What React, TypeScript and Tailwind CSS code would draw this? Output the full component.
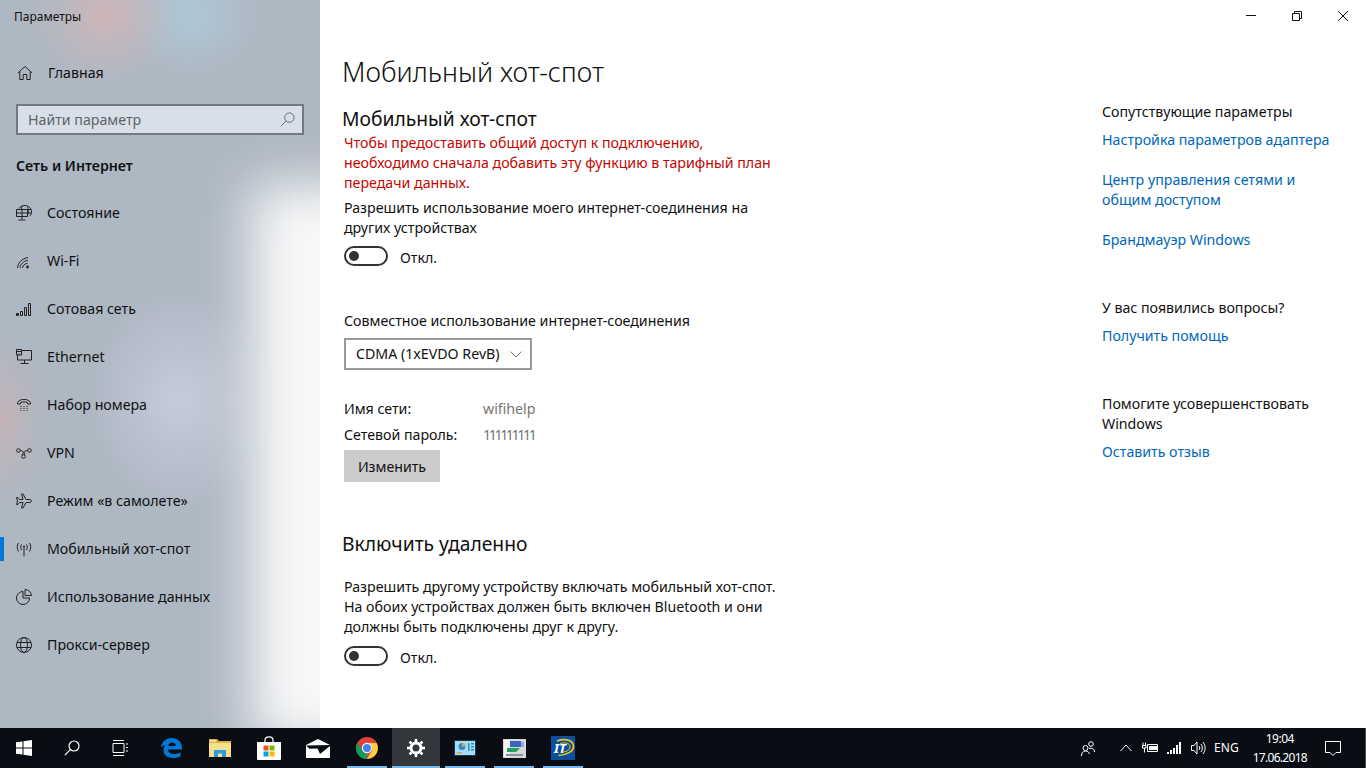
import type { ReactNode } from "react";

const stroke = { fill: "none", stroke: "currentColor", strokeWidth: 1 };

function Glyph({ children, size = 16 }: { children: ReactNode; size?: number }) {
  return (
    <svg width={size} height={size} viewBox="0 0 16 16" {...stroke}>
      {children}
    </svg>
  );
}

const navItems: { label: string; icon: ReactNode; active?: boolean }[] = [
  {
    label: "Состояние",
    icon: (
      <Glyph>
        <path d="M3 3.500C4.200 1.500 6.500.5 9 .5c3.500 0 6.500 2.800 6.500 6.300 0 1.800-.8 3.400-2 4.500" />
        <path d="M6.500 1c-.7 1-1 2-1.200 3M11.500 1.500c1 2.500 1 6 0 8.500M12 4.500h3.300M12 8h3.300" />
        <path d="M.5 4.500h11v7H.5zM.5 8h11M6 4.500v7M6 11.500v3M2.500 15h7" />
      </Glyph>
    ),
  },
  {
    label: "Wi-Fi",
    icon: (
      <Glyph>
        <path d="M1.500 15C2 9.500 6 5.500 12 4.500M4 15c.4-4 3.400-7 8-7.800M6.500 15c.3-2.400 2-4.200 5-4.800" />
        <circle cx="11.500" cy="14" r="1.400" fill="currentColor" stroke="none" />
      </Glyph>
    ),
  },
  {
    label: "Сотовая сеть",
    icon: (
      <Glyph>
        <path d="M.5 12.500h2v2h-2z" fill="currentColor" />
        <path d="M4.500 10.500h2v4h-2zM8.500 6.500h2v8h-2zM12.500 2.500h2v12h-2z" />
      </Glyph>
    ),
  },
  {
    label: "Ethernet",
    icon: (
      <Glyph>
        <path d="M5.500 1.500h10v9.500H1.500V6M8.500 11v3.500M4.500 14.500h8" />
        <path d="M.5.500h5v5.500h-5zM.5 2.500h5M3 6V4.500" />
      </Glyph>
    ),
  },
  {
    label: "Набор номера",
    icon: (
      <Glyph>
        <path d="M1.500 7V5.500C3 3 5.500 2.500 8 2.500s5 .5 6.500 3V7h-3V5.500c-2-.7-5-.7-7 0V7z" />
        <path d="M4.500 9.500h1M7.500 9.500h1M10.500 9.500h1M4.500 11.500h1M7.500 11.500h1M10.500 11.500h1M4.500 13.500h1M7.500 13.500h1M10.500 13.500h1" />
      </Glyph>
    ),
  },
  {
    label: "VPN",
    icon: (
      <Glyph>
        <circle cx="2.500" cy="5.500" r="1.800" />
        <circle cx="13.500" cy="5.500" r="1.800" />
        <circle cx="7.500" cy="11.500" r="1.800" />
        <path d="M4.300 5.500c2 0 4 1.500 4.500 4.500M11.700 5.500C9 5.500 7 7.500 6.200 10" />
      </Glyph>
    ),
  },
  {
    label: "Режим «в самолете»",
    icon: (
      <Glyph>
        <path d="M15.500 8c0-.8-1-1.500-2.500-1.500H10L7 1H5.500L7 6.500H3.500L2 4.500H.5l1 3.500-1 3.500H2l1.500-2H7L5.500 15H7l3-5.500h3c1.500 0 2.500-.7 2.500-1.500z" />
      </Glyph>
    ),
  },
  {
    label: "Мобильный хот-спот",
    active: true,
    icon: (
      <Glyph>
        <path d="M8 6.500v9" />
        <path d="M5.500 3.500C4.500 5 4.500 7.500 5.500 9M10.500 3.500c1 1.500 1 4 0 5.500M2.500 2C.8 4.500.8 8 2.500 10.500M13.500 2c1.700 2.500 1.700 6 0 8.500" />
        <circle cx="8" cy="5.500" r="1" fill="currentColor" stroke="none" />
      </Glyph>
    ),
  },
  {
    label: "Использование данных",
    icon: (
      <Glyph>
        <path d="M7 2.500a6.500 6.500 0 1 0 6.500 6.500H7z" />
        <path d="M9 .5v6h6.500A6.500 6.500 0 0 0 9 .5z" />
      </Glyph>
    ),
  },
  {
    label: "Прокси-сервер",
    icon: (
      <Glyph>
        <circle cx="8" cy="8" r="7.500" />
        <ellipse cx="8" cy="8" rx="3.500" ry="7.500" />
        <path d="M1 5.500h14M1 10.500h14" />
      </Glyph>
    ),
  },
];

function Toggle({ className }: { className: string }) {
  return (
    <div className={`flex h-5 items-center ${className}`}>
      <span className="flex h-5 w-11 items-center rounded-full border-2 border-[#333] pl-[3px]">
        <span className="h-[10px] w-[10px] rounded-full bg-[#333]" />
      </span>
      <span className="ml-3 mt-1">Откл.</span>
    </div>
  );
}

function RightLink({ children, className = "" }: { children: ReactNode; className?: string }) {
  return <p className={`text-[#0067b8] ${className}`}>{children}</p>;
}

function TaskButton({ children, open, active }: { children: ReactNode; open?: boolean; active?: boolean }) {
  return (
    <div className={`relative flex h-10 w-12 shrink-0 items-center justify-center ${active ? "bg-[#33373b]" : ""}`}>
      {children}
      {open && <span className={`absolute bottom-0 h-[2px] bg-[#76b9ed] ${active ? "inset-x-0" : "inset-x-1"}`} />}
    </div>
  );
}

export default function App() {
  return (
    <div className="relative flex h-screen w-[1366px] flex-col overflow-hidden bg-white font-['Noto_Sans','Open_Sans',sans-serif] text-[14.200px] leading-5 text-black">
      <div className="flex h-[728px]">
        <aside className="relative w-80 shrink-0 overflow-hidden bg-[#aeb8c3] bg-[radial-gradient(ellipse_70px_70px_at_105px_15px,#cdb6b9,transparent),radial-gradient(ellipse_70px_60px_at_190px_15px,#aec8d6,transparent),radial-gradient(ellipse_50px_90px_at_0px_420px,#c2b3b7,transparent),radial-gradient(ellipse_90px_110px_at_180px_400px,#c6cbda,transparent)] text-[#111]">
          {/* wallpaper glow behind the acrylic */}
          <div className="absolute left-[252px] top-[185px] h-[560px] w-[140px] bg-[#f8f8f8] blur-[26px]" />
          <div className="relative flex flex-col">
            <p className="pl-[14px] pt-[7px] text-[12px] leading-5">Параметры</p>
            <div className="mt-[36px] flex h-5 items-center pl-[17px]">
              <span className="flex w-[31px] text-[#222]">
                <Glyph>
                  <path d="M.8 8 8 1.500 15.200 8M2.800 6.500V14.500H6.200V9.500H9.800V14.500H13.200V6.500" />
                </Glyph>
              </span>
              <span>Главная</span>
            </div>
            <div className="ml-4 mt-[21px] flex h-[31px] w-[288px] items-center justify-between border-2 border-[#737a80] bg-[#d9dfe8] pl-[10px] pr-[7px] text-[#5f6367]">
              <span>Найти параметр</span>
              <svg width="15" height="15" viewBox="0 0 16 16" {...stroke}>
                <circle cx="10" cy="6" r="5" />
                <path d="M6.300 9.700.8 15.200" />
              </svg>
            </div>
            <p className="ml-4 mt-[21px] font-semibold">Сеть и Интернет</p>
            <nav className="mt-[13px] flex flex-col">
              {navItems.map((item) => (
                <div key={item.label} className="relative flex h-12 items-center pl-4">
                  {item.active && <span className="absolute left-0 top-3 h-6 w-1 bg-[#0078d7]" />}
                  <span className="flex w-[31px] text-[#222]">{item.icon}</span>
                  <span>{item.label}</span>
                </div>
              ))}
            </nav>
          </div>
        </aside>

        <main className="flex min-w-0 flex-1 text-[#111]">
          <section className="w-[760px] pl-[22px]">
            <h1 className="mt-[52px] text-[26.900px] font-light leading-10">Мобильный хот-спот</h1>
            <h2 className="mt-[13px] text-[19.300px] leading-[28px]">Мобильный хот-спот</h2>
            <div className="ml-[2px] w-[440px]">
              <p className="text-[#c50500]">
                Чтобы предоставить общий доступ к подключению,
                <br />
                необходимо сначала добавить эту функцию в тарифный план
                <br />
                передачи данных.
              </p>
              <p className="mt-[5px]">
                Разрешить использование моего интернет-соединения на
                <br />
                других устройствах
              </p>
              <Toggle className="mt-[8px]" />
              <p className="mt-[45px]">Совместное использование интернет-соединения</p>
              <div className="mt-[7px] flex h-8 w-[188px] items-center border-2 border-[#999] pl-[10px]">
                <span>CDMA (1xEVDO RevB)</span>
                <svg className="ml-auto mr-2 text-[#777]" width="12" height="7" viewBox="0 0 12 7" {...stroke}>
                  <path d="M.5.500 6 6l5.500-5.500" />
                </svg>
              </div>
              <div className="mt-[29px] grid grid-cols-[139px_1fr] gap-y-[6px]">
                <span>Имя сети:</span>
                <span className="text-[#767676]">wifihelp</span>
                <span>Сетевой пароль:</span>
                <span className="tracking-[-2.400px] text-[#767676]">111111111</span>
              </div>
              <div className="mt-[5px] flex h-8 w-24 items-center justify-center bg-[#ccc] pt-[1px]">Изменить</div>
            </div>
            <h2 className="mt-[48px] text-[19.300px] leading-[28px]">Включить удаленно</h2>
            <div className="ml-[2px] w-[460px]">
              <p className="mt-[19px]">
                Разрешить другому устройству включать мобильный хот-спот.
                <br />
                На обоих устройствах должен быть включен Bluetooth и они
                <br />
                должны быть подключены друг к другу.
              </p>
              <Toggle className="mt-[9px]" />
            </div>
          </section>

          <section className="ml-[22px] flex w-[264px] flex-col">
            <p className="mt-[102px]">Сопутствующие параметры</p>
            <RightLink className="mt-2">Настройка параметров адаптера</RightLink>
            <RightLink className="mt-5">
              Центр управления сетями и
              <br />
              общим доступом
            </RightLink>
            <RightLink className="mt-5">Брандмауэр Windows</RightLink>
            <p className="mt-[48px]">У вас появились вопросы?</p>
            <RightLink className="mt-2">Получить помощь</RightLink>
            <p className="mt-[48px]">
              Помогите усовершенствовать
              <br />
              Windows
            </p>
            <RightLink className="mt-2">Оставить отзыв</RightLink>
          </section>

          <div className="absolute right-0 top-0 flex h-8 text-[#111]">
            <span className="flex w-[46px] items-center justify-center">
              <svg width="12" height="12" viewBox="0 0 12 12" {...stroke}><path d="M1 5.500h10" /></svg>
            </span>
            <span className="flex w-[46px] items-center justify-center">
              <svg width="12" height="12" viewBox="0 0 12 12" {...stroke}><path d="M1.500 3.500h7v7h-7zM3.500 3.500v-2h7v7h-2" /></svg>
            </span>
            <span className="flex w-[46px] items-center justify-center">
              <svg width="12" height="12" viewBox="0 0 12 12" {...stroke}><path d="m1 1 10 10M11 1 1 11" /></svg>
            </span>
          </div>
        </main>
      </div>

      <footer className="flex h-10 items-center bg-[#0a0e14] text-white">
        <TaskButton>
          <svg width="16" height="16" viewBox="0 0 16 16" fill="#fff"><path d="M0 2.300 6.500 1.400V7.500H0zM7.500 1.200 16 0V7.500H7.500zM0 8.500h6.500v6.100L0 13.700zM7.500 8.500H16V16l-8.500-1.200z" /></svg>
        </TaskButton>
        <TaskButton>
          <svg width="16" height="16" viewBox="0 0 16 16" fill="none" stroke="#fff" strokeWidth="1.200"><circle cx="10" cy="6" r="5" /><path d="M6.300 9.700.8 15.200" /></svg>
        </TaskButton>
        <TaskButton>
          <svg width="16" height="16" viewBox="0 0 16 16" fill="none" stroke="#fff"><path d="M1 .5h11M1 15.500h11M1 3.500h11v9H1zM14 4h2M14 7.500h2M14 11h2" /></svg>
        </TaskButton>
        <div className="ml-[3px] flex gap-px">
          <TaskButton>
            <svg width="21" height="20" viewBox="0 0 21 20"><path fill="#0078d7" d="M0 9.500C1 3.500 5 0 10.500 0 16.500 0 21 3.800 21 10v1.500H7c.3 3.300 2.800 4.500 6 4.500 2.500 0 5-.8 6.500-1.800v4C17.500 19.300 15 20 12 20 6 20 2.500 16.500 2.500 12c0-2 .8-3.800 2.200-5C3 7.300 1.500 8 0 9.500zM7.200 8h7.600c0-2.300-1.500-3.500-3.500-3.500S7.600 5.700 7.200 8z" /></svg>
          </TaskButton>
          <TaskButton>
            <svg width="22" height="18" viewBox="0 0 22 18"><path fill="#d9b347" d="M0 0h8l2 2h12v16H0z" /><path fill="#f6e08e" d="M0 4h22v14H0zM1 1h6v2H1z" /><path fill="#2b9cdc" d="M5 18v-7h12v7h-4v-3.500H9V18z" /></svg>
          </TaskButton>
          <TaskButton>
            <svg width="24" height="24" viewBox="0 0 24 24"><path fill="none" stroke="#fff" strokeWidth="1.200" d="M8 7V4c0-4.200 8-4.200 8 0v3" /><path fill="#fff" d="M0 6h24v17a1 1 0 0 1-1 1H1a1 1 0 0 1-1-1z" /><path fill="#f25022" d="M6.500 9.500H11.500v5H6.500z" /><path fill="#7fba00" d="M12.500 9.500h5v5h-5z" /><path fill="#00a4ef" d="M6.500 15.500H11.500v5H6.500z" /><path fill="#ffb900" d="M12.500 15.500h5v5h-5z" /></svg>
          </TaskButton>
          <TaskButton>
            <svg width="24" height="19" viewBox="0 0 24 19"><path fill="#fff" d="M12 0 24 6v13H0V6z" /><path fill="#0a0e14" d="M0 6.500 24 6v1L14 15l-2.500-5.500-8 .2z" /></svg>
          </TaskButton>
          <TaskButton open>
            <svg width="22" height="22" viewBox="0 0 24 24"><circle cx="12" cy="12" r="12" fill="#db4437" /><path fill="#ffcd40" d="M12 6.500h10.500A12 12 0 0 1 12 24l5-8.500A6 6 0 0 0 12 6.500z" /><path fill="#0f9d58" d="M1.600 6 7 15a6 6 0 0 0 5 3l-.2 6A12 12 0 0 1 1.600 6z" /><circle cx="12" cy="12" r="5.600" fill="#fff" /><circle cx="12" cy="12" r="4.500" fill="#4285f4" /></svg>
          </TaskButton>
          <TaskButton active open>
            <svg width="18" height="18" viewBox="0 0 18 18" fill="none" stroke="#fff" strokeWidth="3"><circle cx="9" cy="9" r="5" /><path strokeWidth="2.600" d="M9 0v3M9 15v3M0 9h3M15 9h3M2.600 2.600l2 2M13.400 13.400l2 2M15.400 2.600l-2 2M4.600 13.400l-2 2" /></svg>
          </TaskButton>
          <TaskButton open>
            <svg width="22" height="16" viewBox="0 0 22 16"><path fill="#173a57" d="M0 0h22v16H0z" /><path fill="#a8dcf5" d="M1 1h20v14H1z" /><path fill="#2b8fc9" d="M14 3h1.500v8H14zM17 3h3v1.500h-3zM17 6h3v1.500h-3zM17 9h3v1.500h-3z" /><circle cx="8" cy="6.500" r="3.500" fill="#2b8fc9" /><path fill="#e8a33c" d="M8 3a3.500 3.500 0 0 1 3.500 3.500H8z" /><path fill="#e8a33c" d="M3 12h5v1.500H3z" /></svg>
          </TaskButton>
          <TaskButton open>
            <svg width="23" height="19" viewBox="0 0 23 19"><path fill="#d6d8da" d="M0 0h23v19H0z" /><path fill="#f2f2f2" d="M1 1h6v17H1z" /><path fill="#3f63c0" d="M7 2h11v6H7z" /><path fill="#8fa9e4" d="M18 3h3v5h-3z" /><path fill="#21a35a" d="M4 9h13l-4 4H4z" /><path fill="#8d9094" d="M3 15h17v2H3z" /></svg>
          </TaskButton>
          <TaskButton open>
            <div className="relative flex h-6 w-6 items-center overflow-hidden bg-[#0b4f9e] text-[13px] font-bold italic leading-none text-white">
              <svg className="absolute inset-0" width="24" height="24" viewBox="0 0 24 24" fill="none" stroke="#f2c615">
                <path strokeWidth="1.600" d="M6 5c8-3 16-1 16.500 5 .4 5-6 9-15 9.500" />
                <path d="M9 7.500c6-1.500 10 0 10 3.500 0 3-4 5-9 5.500" />
              </svg>
              <span className="relative ml-[3px]">IT</span>
            </div>
          </TaskButton>
        </div>

        <div className="ml-auto flex h-10 items-center text-[12px] leading-5">
          <svg className="mr-[25px]" width="14" height="15" viewBox="0 0 14 15" fill="none" stroke="#fff"><circle cx="4.500" cy="7" r="2.500" /><path d="M.5 15c0-3 1.500-5 4-5s3.500 1.500 4 3" /><circle cx="10" cy="3" r="2.300" /><path d="M8 7.500c3-1 5.500.5 5.500 3.500" /></svg>
          <svg className="mr-[10px]" width="12" height="8" viewBox="0 0 12 8" fill="none" stroke="#fff"><path d="m.5 7 5.500-6 5.500 6" /></svg>
          <svg className="mr-[9px]" width="16" height="12" viewBox="0 0 16 12" fill="none" stroke="#fff"><path d="M1 .5v3M3.500.5v3M.5 3.500h3.500v2.500H.5zM2.500 6v4.500M5.500 2.500h10v7h-10z" /><path fill="#fff" stroke="none" d="M7 4h8v4H7z" /></svg>
          <svg className="mr-[10px]" width="14" height="12" viewBox="0 0 14 12" fill="#fff"><path d="M0 10h2v2H0zM3 8h2v4H3zM6 6h2v6H6zM9 3h2v9H9zM12 0h2v12h-2z" /></svg>
          <svg className="mr-[8px]" width="15" height="14" viewBox="0 0 15 14" fill="none" stroke="#fff"><path d="M.5 4.500h2.500l3-3.500v12l-3-3.500H.5zM8 5c1 1 1 3 0 4M10 3c1.800 2 1.800 6 0 8M12 1c2.800 3 2.800 9 0 12" /></svg>
          <span className="mr-[14px]">ENG</span>
          <div className="mr-[18px] flex flex-col items-center">
            <span className="leading-[19px] tracking-[-0.500px]">19:04</span>
            <span className="leading-[19px] tracking-[-0.700px]">17.06.2018</span>
          </div>
          <svg className="mr-[24px]" width="16" height="16" viewBox="0 0 16 16" fill="none" stroke="#fff"><path d="M.5 1.500h15v11h-4.500L8 15.500 5 12.500H.5z" /></svg>
          <span className="h-10 w-px bg-[#444]" />
        </div>
      </footer>
    </div>
  );
}
